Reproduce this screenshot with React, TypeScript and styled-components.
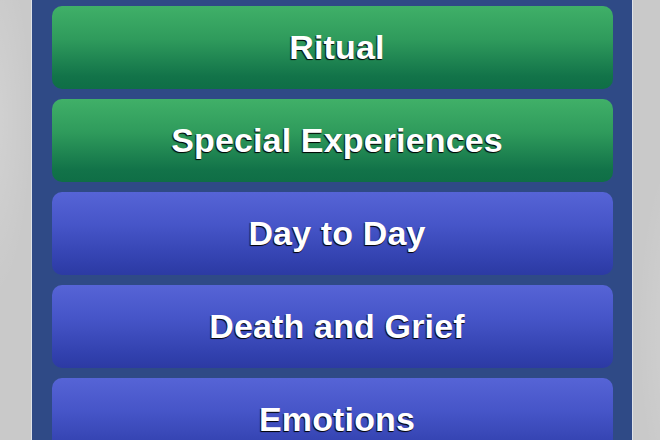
import React from 'react'
import styled, { createGlobalStyle } from 'styled-components'

const GlobalStyle = createGlobalStyle`
  html, body {
    margin: 0;
    padding: 0;
  }
  body {
    font-family: 'Liberation Sans', Arial, sans-serif;
  }
`

const Screen = styled.div`
  width: 660px;
  height: 440px;
  overflow: hidden;
  display: flex;
  padding: 0 27px 0 31px;
  box-sizing: border-box;
  background:
    radial-gradient(ellipse 60px 260px at -10px 120px, rgba(255, 255, 255, 0.18), transparent 70%),
    radial-gradient(ellipse 60px 260px at 680px 330px, rgba(255, 255, 255, 0.16), transparent 70%),
    #c9c9c9;
`

const Panel = styled.div`
  flex: 1;
  display: flex;
  flex-direction: column;
  gap: 10px;
  padding: 6px 19px 0 20px;
  background: #2f4a86;
  border-left: 1px solid #dfe2e8;
  border-right: 1px solid #dfe2e8;
`

type Tone = 'green' | 'blue'

const gradients: Record<Tone, string> = {
  green: 'linear-gradient(to bottom, #40b068 0%, #2f9b5c 40%, #127349 85%, #0f6e46 100%)',
  blue: 'linear-gradient(to bottom, #5664d6 0%, #4655c8 40%, #3140ad 85%, #2c3aa3 100%)',
}

const MenuButton = styled.button<{ $tone: Tone }>`
  flex: 0 0 83px;
  display: flex;
  align-items: center;
  justify-content: center;
  border: none;
  border-radius: 10px;
  background: ${p => gradients[p.$tone]};
  color: #ffffff;
  font-family: 'Liberation Sans', Arial, sans-serif;
  font-weight: bold;
  font-size: 34px;
  letter-spacing: 0.15px;
  text-shadow: -1px 1px 1px rgba(0, 0, 0, 0.85), 0 1px 0 rgba(0, 0, 0, 0.6);
  cursor: pointer;
  padding: 0 0 0 9px;
`

const ITEMS: { label: string; tone: Tone }[] = [
  { label: 'Ritual', tone: 'green' },
  { label: 'Special Experiences', tone: 'green' },
  { label: 'Day to Day', tone: 'blue' },
  { label: 'Death and Grief', tone: 'blue' },
  { label: 'Emotions', tone: 'blue' },
]

export default function App() {
  return (
    <>
      <GlobalStyle />
      <Screen>
        <Panel>
          {ITEMS.map(({ label, tone }) => (
            <MenuButton key={label} $tone={tone}>
              {label}
            </MenuButton>
          ))}
        </Panel>
      </Screen>
    </>
  )
}
